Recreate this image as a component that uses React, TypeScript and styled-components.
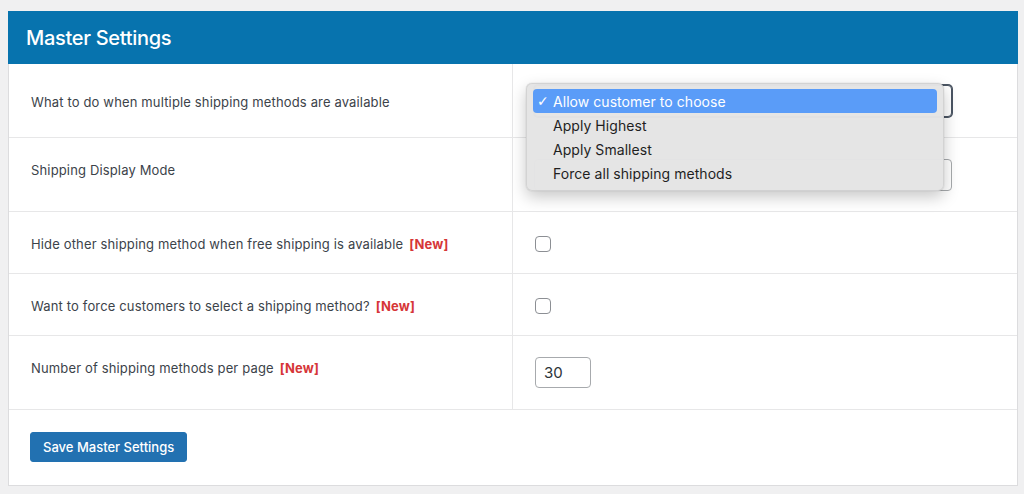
import React from 'react';
import styled, { createGlobalStyle } from 'styled-components';

const GlobalStyle = createGlobalStyle`
  html, body {
    margin: 0;
    padding: 0;
    background: #f0f0f1;
    font-family: Inter, 'Liberation Sans', Arial, sans-serif;
    color: #3c434a;
  }
  * {
    box-sizing: border-box;
  }
`;

const Page = styled.div`
  padding: 11px 6px 8px 8px;
  width: 1024px;
  height: 494px;
`;

const Panel = styled.div`
  background: #fff;
  border: 1px solid #dcdcde;
`;

const PanelHeader = styled.div`
  height: 53px;
  margin: -1px -1px 0;
  background: #0773ae;
  display: flex;
  align-items: center;
  padding: 0 18px;
`;

const PanelTitle = styled.h2`
  margin: 0;
  color: #fff;
  font-size: 20px;
  font-weight: 500;
  letter-spacing: -0.3px;
`;

const Row = styled.div<{ $height: number }>`
  display: grid;
  grid-template-columns: 504px 1fr;
  height: ${({ $height }) => $height}px;
  border-bottom: 1px solid #e7e7e8;
`;

const LabelCell = styled.div<{ $top: number }>`
  padding: ${({ $top }) => $top}px 22px 0;
  border-right: 1px solid #e7e7e8;
  font-size: 13px;
  line-height: 20px;
  letter-spacing: 0.15px;
  color: #3c434a;
`;

const NewTag = styled.span`
  color: #d63638;
  font-weight: 700;
  margin-left: 6px;
`;

const FieldCell = styled.div<{ $top: number }>`
  position: relative;
  padding: ${({ $top }) => $top}px 22px 0 21px;
`;

const SelectBox = styled.div<{ $focused?: boolean }>`
  width: 418px;
  height: 32px;
  border: 1px solid ${({ $focused }) => ($focused ? '#4b5563' : '#a7aaad')};
  border-radius: 4px;
  box-shadow: ${({ $focused }) => ($focused ? '0 0 0 1px #4b5563' : 'none')};
  background: #fff;
`;

const Checkbox = styled.div`
  width: 16px;
  height: 16px;
  margin-left: 1px;
  border: 1px solid #8c8f94;
  border-radius: 4px;
  background: #fff;
`;

const NumberInput = styled.div`
  width: 56px;
  height: 31px;
  margin-left: 1px;
  border: 1px solid #a7aaad;
  border-radius: 4px;
  display: flex;
  align-items: center;
  padding: 0 8px;
  font-size: 15px;
  color: #2c3338;
`;

const Dropdown = styled.div`
  position: absolute;
  left: 13px;
  top: 19px;
  width: 418px;
  padding: 5px 6px;
  background: rgba(228, 228, 228, 0.98);
  border: 1px solid rgba(0, 0, 0, 0.08);
  border-radius: 6px;
  box-shadow: 0 6px 16px rgba(0, 0, 0, 0.22), 0 0 1px rgba(0, 0, 0, 0.3);
  z-index: 5;
`;

const Option = styled.div<{ $selected?: boolean }>`
  position: relative;
  height: 24px;
  display: flex;
  align-items: center;
  padding-left: 20px;
  border-radius: 4px;
  font-size: 14px;
  letter-spacing: 0.05px;
  background: ${({ $selected }) => ($selected ? '#5a9cf8' : 'transparent')};
  color: ${({ $selected }) => ($selected ? '#fff' : '#1f1f1f')};
`;

const Check = styled.span`
  position: absolute;
  left: 4px;
  font-family: 'DejaVu Sans', sans-serif;
  font-size: 14px;
`;

const Footer = styled.div`
  height: 75px;
  padding: 22px 21px 0;
`;

const SaveButton = styled.button`
  height: 30px;
  padding: 0 12px;
  border: 1px solid #2271b1;
  border-radius: 3px;
  background: #2271b1;
  color: #fff;
  font-family: inherit;
  font-size: 13px;
  font-weight: 500;
  cursor: pointer;
`;

const options = [
  'Allow customer to choose',
  'Apply Highest',
  'Apply Smallest',
  'Force all shipping methods',
];

export default function App() {
  return (
    <>
      <GlobalStyle />
      <Page>
        <Panel>
          <PanelHeader>
            <PanelTitle>Master Settings</PanelTitle>
          </PanelHeader>

          <Row $height={74}>
            <LabelCell $top={28}>What to do when multiple shipping methods are available</LabelCell>
            <FieldCell $top={21}>
              <SelectBox $focused />
              <Dropdown>
                {options.map((opt, i) => (
                  <Option key={opt} $selected={i === 0}>
                    {i === 0 && <Check>✓</Check>}
                    {opt}
                  </Option>
                ))}
              </Dropdown>
            </FieldCell>
          </Row>

          <Row $height={74}>
            <LabelCell $top={22}>Shipping Display Mode</LabelCell>
            <FieldCell $top={21}>
              <SelectBox />
            </FieldCell>
          </Row>

          <Row $height={62}>
            <LabelCell $top={22}>
              Hide other shipping method when free shipping is available<NewTag>[New]</NewTag>
            </LabelCell>
            <FieldCell $top={24}>
              <Checkbox />
            </FieldCell>
          </Row>

          <Row $height={62}>
            <LabelCell $top={22}>
              Want to force customers to select a shipping method?<NewTag>[New]</NewTag>
            </LabelCell>
            <FieldCell $top={24}>
              <Checkbox />
            </FieldCell>
          </Row>

          <Row $height={74}>
            <LabelCell $top={22}>
              Number of shipping methods per page<NewTag>[New]</NewTag>
            </LabelCell>
            <FieldCell $top={21}>
              <NumberInput>30</NumberInput>
            </FieldCell>
          </Row>

          <Footer>
            <SaveButton>Save Master Settings</SaveButton>
          </Footer>
        </Panel>
      </Page>
    </>
  );
}
